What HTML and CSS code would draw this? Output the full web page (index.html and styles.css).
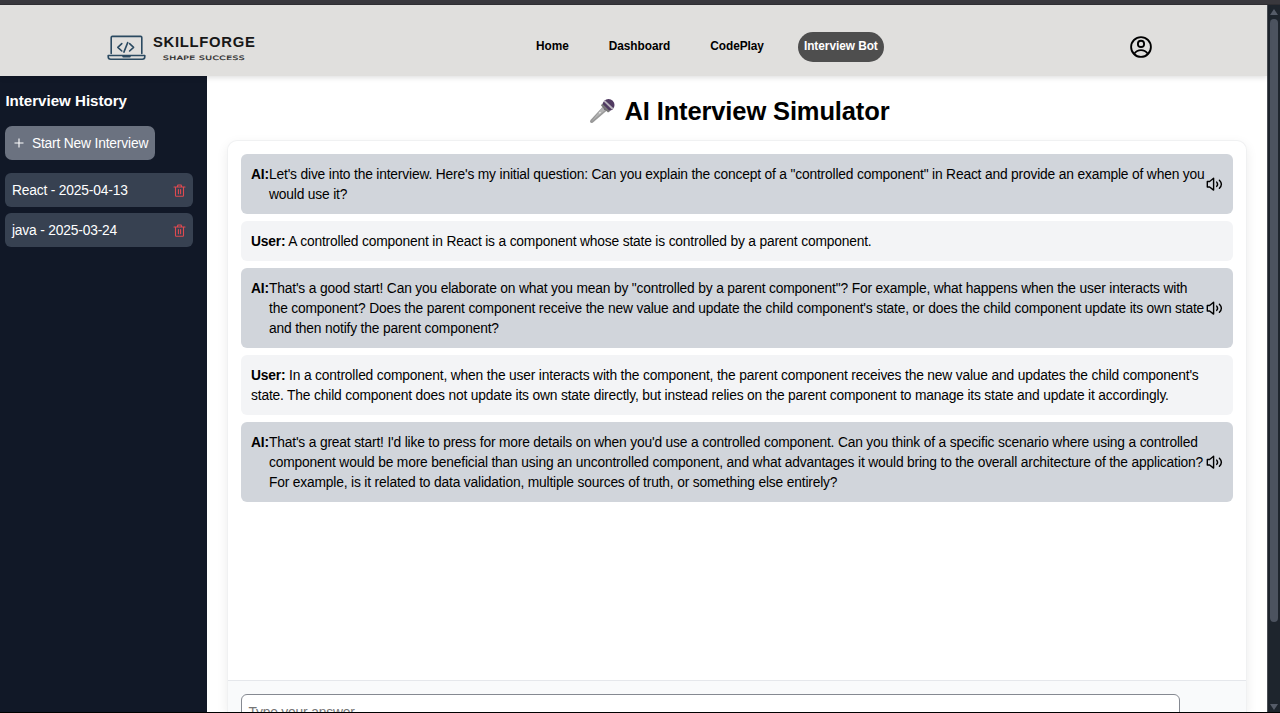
FILE: index.html
```html
<!DOCTYPE html>
<html lang="en">
<head>
<meta charset="utf-8">
<title>SkillForge - AI Interview Simulator</title>
<link rel="stylesheet" href="styles.css">
</head>
<body>
<svg class="defs" width="0" height="0" aria-hidden="true">
  <symbol id="trash" viewBox="0 0 13 13" fill="none" stroke="currentColor" stroke-width="1.100" stroke-linecap="round" stroke-linejoin="round">
    <path d="M1 3h11M2.500 3v8.500q0 .8.800.8h6.400q.8 0 .8-.8V3M4.300 3l.6-2h3.200l.6 2M5.400 5.500v4.300M7.600 5.500v4.300"/>
  </symbol>
  <symbol id="volume" viewBox="0 0 17 17" fill="none" stroke="currentColor" stroke-width="1.400" stroke-linecap="round" stroke-linejoin="round">
    <path d="M1.300 5.500h2.300L7.600 2.300v11.800L3.600 11H1.300zM10.700 6.100q1.800 2.200 0 4.300M13.400 4.200q4 4 0 8"/>
  </symbol>
</svg>
<div class="topline"></div>
<div class="window">
  <div class="page">
    <header class="navbar">
      <svg class="logo" viewBox="0 0 150 30">
        <g fill="none" stroke="#2b4a61" stroke-width="1.600" stroke-linecap="round" stroke-linejoin="round">
          <path d="M4.200 19.500V3.600a1.200 1.200 0 0 1 1.200-1.200h28.200a1.200 1.200 0 0 1 1.200 1.200V19.500"/>
          <path d="M1.200 21.500h36.600v1.200q0 2.500-2.500 2.500H3.700q-2.500 0-2.500-2.500z"/>
          <path d="M16 22.600h7"/>
          <path d="M14.800 9.600l-4 3.700 4 3.700M22.600 9.600l4 3.700-4 3.700M20.700 8.600l-3.800 9.500"/>
        </g>
        <text x="46" y="13.200" class="logo-name" textLength="102.500" lengthAdjust="spacingAndGlyphs">SKILLFORGE</text>
        <text x="56" y="25.800" class="logo-tag" textLength="82" lengthAdjust="spacingAndGlyphs">SHAPE SUCCESS</text>
      </svg>
      <nav class="links">
        <a>Home</a>
        <a>Dashboard</a>
        <a>CodePlay</a>
        <a class="active">Interview Bot</a>
      </nav>
      <svg class="profile" viewBox="0 0 24 24" fill="none" stroke="#000" stroke-width="2">
        <circle cx="12" cy="12" r="10.800"/><circle cx="12" cy="8.600" r="3.400"/><path d="M4.600 19.400q2.900-4 7.400-4t7.400 4"/>
      </svg>
    </header>
    <div class="content">
      <aside class="sidebar">
        <h2>Interview History</h2>
        <button class="new"><svg viewBox="0 0 12 12"><path d="M6 1.500v9M1.500 6h9" stroke="currentColor" stroke-width="1.100"/></svg><span>Start New Interview</span></button>
        <div class="history"><span>React - 2025-04-13</span><svg><use href="#trash"/></svg></div>
        <div class="history"><span>java - 2025-03-24</span><svg><use href="#trash"/></svg></div>
      </aside>
      <main class="main">
        <h1><svg class="mic" viewBox="0 0 26 26">
          <path d="M14.200 8.200l4 4L4 24.500q-1.700 1-2.600.1t.1-2.600z" fill="#999"/>
          <path d="M14.500 8l3 3L2.500 23.500z" fill="#b4b4b4"/>
          <circle cx="19.500" cy="7" r="6" fill="#503a61"/>
          <path d="M13.200 5.500l7.800 7.800-2 1.200-7-7z" fill="#777"/>
          <path d="M15.300 2.800L23.800 11" stroke="#b9b4bd" stroke-width="1.800"/>
          <path d="M10.300 15.300l1.200-1.200" stroke="#eee" stroke-width="1.300"/>
        </svg><span>AI Interview Simulator</span></h1>
        <section class="card">
          <div class="messages">
            <div class="message ai"><b>AI:</b><p>Let's dive into the interview. Here's my initial question: Can you explain the concept of a "controlled component" in React and provide an example of when you<br>would use it?</p><svg><use href="#volume"/></svg></div>
            <div class="message user"><p><b>User:</b> A controlled component in React is a component whose state is controlled by a parent component.</p></div>
            <div class="message ai"><b>AI:</b><p>That's a good start! Can you elaborate on what you mean by "controlled by a parent component"? For example, what happens when the user interacts with<br>the component? Does the parent component receive the new value and update the child component's state, or does the child component update its own state<br>and then notify the parent component?</p><svg><use href="#volume"/></svg></div>
            <div class="message user"><p><b>User:</b> In a controlled component, when the user interacts with the component, the parent component receives the new value and updates the child component's<br>state. The child component does not update its own state directly, but instead relies on the parent component to manage its state and update it accordingly.</p></div>
            <div class="message ai"><b>AI:</b><p>That's a great start! I'd like to press for more details on when you'd use a controlled component. Can you think of a specific scenario where using a controlled<br>component would be more beneficial than using an uncontrolled component, and what advantages it would bring to the overall architecture of the application?<br>For example, is it related to data validation, multiple sources of truth, or something else entirely?</p><svg><use href="#volume"/></svg></div>
          </div>
          <div class="composer"><div class="field">Type your answer...</div></div>
        </section>
      </main>
    </div>
  </div>
  <div class="scrollbar">
    <svg viewBox="0 0 8 6"><path d="M4 0l4 6H0z"/></svg>
    <div class="thumb"></div>
    <svg viewBox="0 0 8 6"><path d="M0 0h8L4 6z"/></svg>
  </div>
</div>
<div class="bottomline"></div>
</body>
</html>
```
FILE: styles.css
```css
* { box-sizing: border-box; margin: 0; padding: 0; }
body {
  width: 1280px; height: 713px; overflow: hidden;
  display: flex; flex-direction: column;
  font: 13.800px/20.03px "Liberation Sans", Arial, sans-serif;
  letter-spacing: -.174px;
  color: #000; background: #fff;
}
.defs { position: absolute; }
.topline { height: 5px; flex: none; background: #39383d; border-bottom: 1px solid #302f33; }
.bottomline { height: 1px; flex: none; background: #000; }
.window { flex: 1; min-height: 0; display: flex; }
.page { width: 1267px; display: flex; flex-direction: column; min-height: 0; }
.navbar {
  height: 71px; flex: none; display: flex; align-items: center;
  padding: 12px 115px 0 107px; background: #e0dfdd;
  position: relative; box-shadow: 0 2px 5px rgba(0,0,0,.12);
}
.logo { width: 150px; height: 30px; margin-top: 4px; }
.logo-name { font: bold 15px "Liberation Sans", sans-serif; letter-spacing: .7px; fill: #171717; }
.logo-tag { font: 6px "DejaVu Sans", sans-serif; fill: #222; stroke: #222; stroke-width: .2px; letter-spacing: .3px; }
.links {
  display: flex; align-items: center; margin-left: 273px;
  font-size: 11.850px; font-weight: bold; letter-spacing: -.04px;
}
.links a { height: 30px; line-height: 29px; padding: 0 6px; margin-right: 28px; white-space: nowrap; }
.links .active { color: #fff; background: #4e4e4e; border-radius: 15px; margin-right: 0; }
.profile { width: 22px; height: 22px; margin-left: auto; }
.content { flex: 1; display: flex; min-height: 0; }
.sidebar { width: 207px; flex: none; background: #111827; color: #fff; padding: 15px 14px 0 5.400px; }
.sidebar h2 { font-size: 15.100px; line-height: 20px; letter-spacing: 0; margin-bottom: 15px; white-space: nowrap; }
.new {
  display: flex; align-items: center; width: 150px; height: 34px;
  padding: 0 0 0 7.500px; gap: 7px; border: 0; border-radius: 7px;
  font: inherit; letter-spacing: inherit; color: #fff; background: #6b7280; margin-bottom: 13px; white-space: nowrap;
}
.new svg { width: 12px; height: 12px; flex: none; }
.new span, .history span { padding-top: 2px; }
.history {
  height: 34px; display: flex; align-items: center; justify-content: space-between;
  padding: 0 7px 0 6.500px; border-radius: 6px; background: #374151; margin-bottom: 6px;
}
.history svg { width: 13px; height: 13px; color: #df4a50; }
.main { flex: 1; min-width: 0; padding: 20px 20px 0; display: flex; flex-direction: column; }
.main h1 {
  height: 30px; flex: none; display: flex; align-items: center; justify-content: center;
  gap: 10px; font-size: 25.500px; letter-spacing: -.13px; margin-bottom: 14px; padding-left: 4px; white-space: nowrap;
}
.mic { width: 26px; height: 26px; }
.card {
  flex: 1; min-height: 0; display: flex; flex-direction: column;
  border: 1px solid #f0f1f2; border-bottom: 0; border-radius: 10px 10px 0 0;
  box-shadow: 0 4px 12px rgba(0,0,0,.08); background: #fff;
}
.messages { height: 539px; flex: none; padding: 13px; display: flex; flex-direction: column; gap: 7px; }
.message { padding: 11px 10px 9px; border-radius: 6px; white-space: nowrap; display: flex; }
.ai { background: #d1d5db; }
.user { background: #f3f4f6; }
.ai > b { width: 18px; flex: none; }
.ai p { width: 937px; flex: none; }
.ai svg { width: 17px; height: 17px; flex: none; align-self: center; margin-bottom: 2px; }
.composer { flex: 1; min-height: 0; overflow: hidden; border-top: 1px solid #e5e7eb; background: #f9fafb; padding: 13px 66px 0 13px; }
.field { height: 36px; border: 1px solid #858991; border-radius: 6px; padding: 7.500px 6.500px; background: #fff; color: #757575; }
.scrollbar {
  width: 13px; background: #1e252d; border-left: 1px solid #4a4e54;
  display: flex; flex-direction: column; align-items: center; padding: 4px 0 2px;
}
.scrollbar svg { width: 8px; height: 6px; fill: #555c68; flex: none; }
.thumb { width: 8px; height: 603px; border-radius: 4px; background: #4c535f; margin: 4px 0 auto; }
```
